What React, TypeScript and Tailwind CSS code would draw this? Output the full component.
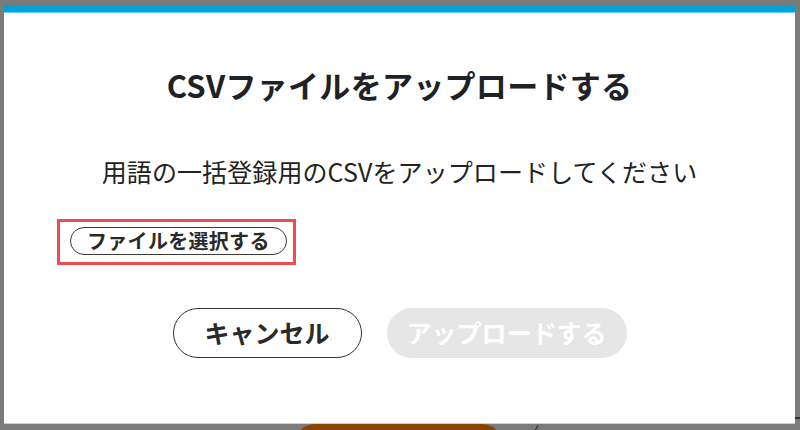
import React from "react";

export default function App() {
  return (
    <div
      className="relative w-[800px] h-[430px] overflow-hidden bg-[#7b7b7b] pt-[5px] pl-[4px]"
      style={{ fontFamily: '"Noto Sans CJK JP", "Noto Sans", sans-serif' }}
    >
      {/* background item peeking below the dialog */}
      <div className="absolute left-[295px] top-[424px] w-[207px] h-[20px] rounded-t-[40px] bg-[#8a4300]" />
      <div className="absolute left-[536px] top-[425px] w-[1px] h-[6px] bg-[#222] rotate-[30deg]" />
      <div className="absolute left-[795px] top-[417px] w-[5px] h-[2px] bg-[#333]" />

      <div className="relative w-[791px] h-[419px] bg-white border-b border-[#cfcfcf] flex flex-col">
        <div className="h-[7px] bg-[#00a3d9]" />
        <div className="h-[1px] bg-[#6ccdee]" />

        <h1 className="mt-[52px] text-center text-[31px] leading-[40px] font-bold text-[#1e2226] tracking-[0.3px]">
          CSVファイルをアップロードする
        </h1>

        <p className="mt-[48px] text-center text-[25px] leading-[36px] text-[#222] tracking-[0.1px]">
          用語の一括登録用のCSVをアップロードしてください
        </p>

        <div className="mt-[30px] ml-[53px] w-fit border-[3px] border-[#ef4b4f] pt-[5px] pb-[7px] pl-[10px] pr-[6px]">
          <button className="h-[28px] px-[16px] rounded-full border-[1.5px] border-[#3a3a3a] text-[20px] leading-[24px] font-bold text-[#2a2a2a] tracking-[0.3px]">
            ファイルを選択する
          </button>
        </div>

        <div className="mt-[43px] flex justify-center gap-[25px]">
          <button className="w-[189px] h-[50px] rounded-full border-[1.5px] border-[#333] text-[25px] font-bold text-[#2a2a2a]">
            キャンセル
          </button>
          <button className="w-[240px] h-[50px] rounded-full bg-[#e6e6e6] text-[25px] font-bold text-white">
            アップロードする
          </button>
        </div>
      </div>
    </div>
  );
}
